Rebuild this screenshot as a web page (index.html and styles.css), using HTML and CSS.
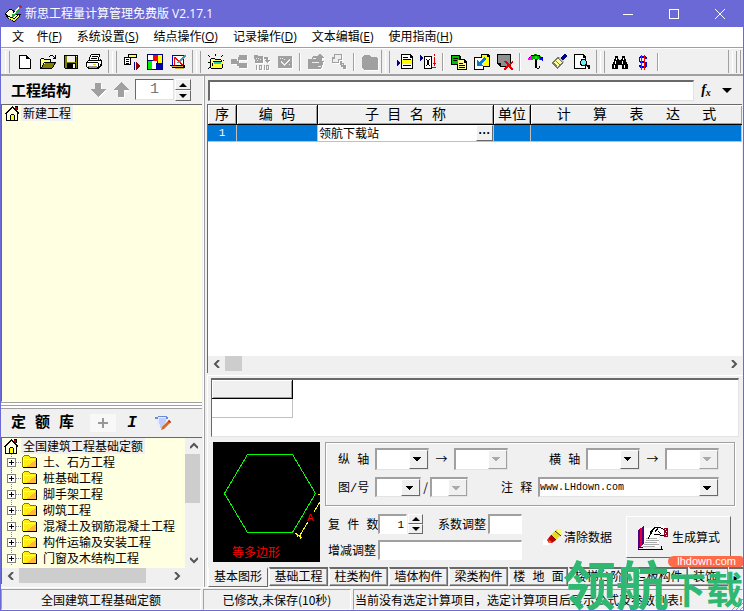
FILE: index.html
```html
<!DOCTYPE html>
<html lang="zh-CN">
<head>
<meta charset="utf-8">
<title>新思工程量计算管理免费版 V2.17.1</title>
<link rel="stylesheet" href="styles.css">
</head>
<body>
<svg class="defs" aria-hidden="true">
  <symbol id="house" viewBox="0 0 16 16">
    <path d="M11 2h2v4h-2z" fill="#c00000"/>
    <path d="M3 8h10v7H3z" fill="#ffffe1"/>
    <path d="M7 10h3v5H7z" fill="#ffff00"/>
    <path d="M1 8h1V7h1V6h1V5h1V4h1V3h1V2h1V1h1v1h1v1h1v1h1v1h1v1h1v1h1v2h-1V8h-1V7h-1V6h-1V5h-1V4h-1V3H8v1H7v1H6v1H5v1H4v1H3v1H1zM2 8h1v7h10V8h1v8H2zM6 10h1V9h3v1h1v5h-1v-5H7v5H6zM11 1h2v1h-2zM13 1h1v4h-1z" fill="#000"/>
  </symbol>
  <symbol id="folder" viewBox="0 0 16 14">
    <path d="M1 2h1V1h5v1h1v1h6v9H1z" fill="#ffee10"/>
    <path d="M14 4v8H4l10-7z" fill="#ffb838"/>
    <path d="M2 1h5V0H2zM0 2h1v10H0zM8 2h6v1H8zM1 1h1v1H1zM7 1h1v1H7z" fill="#808000"/>
    <path d="M1 4h12v1H1zM1 2h1v9H1z" fill="#ffff9c"/>
    <path d="M14 3h1v10H1v-1h13z" fill="#000"/>
  </symbol>
</svg>
<div class="app">
  <header class="titlebar">
    <svg class="app-icon" viewBox="0 0 18 18" aria-hidden="true">
      <path d="M0 8l5-4 4 1 3 4 4 0-1 3-6 5-8-5z" fill="#000"/>
      <path d="M1 8l4-3 3 1 1 3 4 1-4 3-7-3z" fill="#ffffd8"/>
      <path d="M3 12l6 2 5-4v2l-5 4-6-3z" fill="#ffff30"/>
      <path d="M7 10l6-8 3 2-6 7-3 1z" fill="#20b040"/>
      <path d="M8 9l5-7 1 1-5 7z" fill="#fff"/>
      <path d="M13 1l2-1 2 2-1 2z" fill="#d02020"/>
    </svg>
    <h1 class="title">新思工程量计算管理免费版 V2.17.1</h1>
    <div class="window-buttons">
      <button aria-label="最小化"><svg viewBox="0 0 10 10"><path d="M0 5.5h10"/></svg></button>
      <button aria-label="最大化"><svg viewBox="0 0 10 10"><path d="M.5.5h9v9h-9z"/></svg></button>
      <button aria-label="关闭"><svg class="smooth" viewBox="0 0 10 10"><path d="M0 0l10 10M10 0L0 10"/></svg></button>
    </div>
  </header>

  <nav class="menu">
    <button>文    件(<u>F</u>)</button>
    <button>系统设置(<u>S</u>)</button>
    <button>结点操作(<u>O</u>)</button>
    <button>记录操作(<u>D</u>)</button>
    <button>文本编辑(<u>E</u>)</button>
    <button>使用指南(<u>H</u>)</button>
  </nav>

  <div class="toolbar">
    <div class="group">
      <button aria-label="新建"><svg viewBox="0 0 16 16"><path d="M3 1h7l3 3v11H3z" fill="#fff"/><path d="M2 1h8v1H3v12h10V5h1v10H2zM10 2h1v1h1v1h1v1h-4V2z"/></svg></button>
      <button aria-label="打开"><svg viewBox="0 0 16 16"><path d="M1 5h3l1 1h6v3H5l-3 5H1z" fill="#ffff80"/><path d="M5 9h11l-4 5H2z" fill="#808000"/><path d="M1 4h3v1H1zM0 5h1v10H0zM4 5h7v1H4zM10 6h1v2h-1zM4 8h12v1H4zM3 9h1v2H3zM2 11h1v2H2zM1 13h1v1H1zM0 14h12v1H0zM12 13h1v1h-1zM13 11h1v2h-1zM14 9h1v2h-1zM9 2h1V1h3v1h1v1h1V1h1v4h-3V4h1V3h-1V2h-3v1H9z"/></svg></button>
      <button aria-label="保存"><svg viewBox="0 0 16 16"><path d="M1 1h14v14H2l-1-1z"/><path d="M2 2h2v6h9V2h1v12H2z" fill="#808000"/><path d="M4 2h8v6H4z" fill="#eee"/><path d="M4 9h9v6H4z"/><path d="M10 10h2v4h-2zM13 2h1v1h-1z" fill="#eee"/></svg></button>
      <button aria-label="打印"><svg viewBox="0 0 16 16"><path d="M5 1h9l-2 6H3zM1 7h14v6l-2 2H1z" fill="#fff"/><path d="M5 0h9v1H5zM4 1h1v2H4zM3 3h1v3H3zM13 1h1v2h-1zM12 3h1v3h-1zM6 2h6v1H6zM5 4h6v1H5zM2 6h12v1H2zM1 7h1v1H1zM0 8h1v5H0zM1 8h11v1H1zM14 5h1v1h1v6h-1v1h-1v1h-1v1H2v-1H1v-1h11V9h1v3h1v-2h1V7h-1z"/><path d="M2 12h9v2H3z" fill="#999"/><path d="M7 10h3v1H7z" fill="#e8d800"/></svg></button>
    </div>
    <div class="group">
      <button aria-label="添加项"><svg viewBox="0 0 16 16"><path d="M0 3h7v8H0zM4 0h9v4H4z"/><path d="M1 4h5v6H1z" fill="#fff"/><path d="M5 1h7v2H5z" fill="#ffff60"/><path d="M2 5h3v1H2zM2 7h3v1H2zM2 9h3v1H2z"/><path d="M10 8h1v8h-1z" fill="#000080"/><path d="M12 8l4 4-4 4z" fill="#900000"/></svg></button>
      <button aria-label="颜色"><svg viewBox="0 0 16 16"><path d="M0 0h16v16H0z" fill="#000080"/><path d="M1 1h5v5H1z" fill="#fff"/><path d="M6 1h5v6H6z" fill="#f00"/><path d="M11 1h4v8h-4z" fill="#ff0"/><path d="M1 7h4v8H1z" fill="#0e0"/><path d="M5 7h5v8H5z" fill="#fff"/><path d="M9 9h6v6H9z" fill="#0000b0"/></svg></button>
      <button aria-label="图形计算"><svg viewBox="0 0 16 16"><path d="M2 1h12v11H2z" fill="#00c"/><path d="M3 2h10v9H3z" fill="#fff"/><path d="M4 3h1l8 8h-2L5 5v6H4z" fill="#f00"/><path d="M15 0l1 2-7 7H7l1-2z" fill="#40a0a0"/><path d="M0 11h15v3H2z"/><path d="M1 12h12v1H1zM5 14h9v1H5z" fill="#d0b040"/></svg></button>
    </div>
    <div class="group tight">
      <button aria-label="新建结点"><svg viewBox="0 0 16 16"><path d="M3 5h4l1 1h5v8H3z" fill="#ffff70"/><path d="M5 8h11l-3 6H3z" fill="#ffff30"/><path d="M6 8h7v2H6z" fill="#20c8c8"/><path d="M3 4h4v1H3zM2 5h1v9H2zM7 5h6v1H7zM13 6h1v2h-1zM3 14h11v1H3zM14 10h1v4h-1zM5 7h8v1H5zM4 9h1v3H4zM0 1h1v1h1v1H1V2H0zM7 0h1v2H7zM15 1h-1v1h-1v1h1V2h1zM0 8h2v1H0zM0 14h1v-1h1v1H1v1H0zM15 6h1v1h-1z"/></svg></button>
      <button class="off" aria-label="子结点"><svg viewBox="0 0 16 16"><path d="M8 1h8v5H8zM0 5h6v5H0zM8 9h8v5H8zM6 7h1V3h1v2H8v7H6z"/></svg></button>
      <button class="off" aria-label="编号"><svg viewBox="0 0 16 16"><path d="M0 1h3l1 1h5v7H1zM10 3h4v3h2l-3 3-3-3h2V5h-2zM2 11h1v5H2zM5 11h3v5H5zM10 11h1v5h-1zM12 11h3v5h-3z"/><path d="M2 4h1v1H2zM4 4h1v1H4zM6 5h1v1H6zM3 6h1v1H3zM6 12h1v3H6zM13 12h1v3h-1z" fill="#eee"/></svg></button>
      <button class="off" aria-label="确认"><svg viewBox="0 0 16 16"><path d="M1 2h14v12H1z"/><path d="M4 7l3 3 6-6v2l-6 6-3-3zM3 4h1v1H3zM5 4h1v1H5zM7 5h1v1H7zM12 10h1v1h-1z" fill="#eee"/></svg></button>
      <i class="sep"></i>
      <button class="off" aria-label="上移"><svg viewBox="0 0 16 16"><path d="M5 2h4l3-2 4 4h-2v3h2l-3 8H0V5h4z"/><path d="M4 8h7v1H4zM5 4h3v1H5zM10 12h3v1h-3z" fill="#eee"/></svg></button>
      <button class="off" aria-label="排列"><svg viewBox="0 0 16 16"><path d="M3 0h8v6H3zM1 3h7v6H1zM9 7h2v2h2v2h2v4h-3v-2h-2v-2H9z"/><path d="M4 1h6v4H4zM2 5h5v3H2zM11 10h1v1h-1z" fill="#eee"/></svg></button>
      <i class="sep"></i>
      <button class="off" aria-label="停用"><svg viewBox="0 0 16 16"><path d="M1 2h1V1h6v1h1v1h6v1h1v12H2v-1H1v-1H0V3h1z"/></svg></button>
    </div>
    <div class="group">
      <button aria-label="插入行"><svg viewBox="0 0 16 16"><path d="M4 0h9l3 3v12H4z"/><path d="M5 1h8v3h2v10H5z" fill="#fff"/><path d="M5 6h10v4H5z" fill="#ff0"/><path d="M6 3h5v1H6zM6 5h8v1H6zM6 11h8v1H6z"/><path d="M0 6l3 3-3 3z" fill="#000090"/></svg></button>
      <button aria-label="插入列"><svg viewBox="0 0 16 16"><path d="M4 2h8v13H4z"/><path d="M5 3h6v11H5z" fill="#fff"/><path d="M6 5h1v1h2V5h1v1H9v5h1v1H9v-1H7v1H6v-1h1V6H6z"/><path d="M0 1l3 3-3 3z" fill="#000090"/><path d="M14 0h1v2h-1zM14 3h1v6h1v1h-1v2h-1v-2h-1V9h1zM12 13h4v1h-4z" fill="#e00000"/></svg></button>
      <i class="sep"></i>
      <button aria-label="复制"><svg viewBox="0 0 16 16"><path d="M0 1h8l2 2v8H0zM6 5h7l3 3v8H6z"/><path d="M1 2h7v8H1z" fill="#00c000"/><path d="M7 6h6v3h2v6H7z" fill="#ffff90"/><path d="M2 4h5v1H2zM2 6h4v1H2zM8 9h4v1H8zM8 11h6v1H8zM8 13h6v1H8z"/></svg></button>
      <button aria-label="粘贴"><svg viewBox="0 0 16 16"><path d="M7 0h7l2 2v11H7zM0 3h10v13H0z"/><path d="M8 1h5v2h2v9H8z" fill="#ff0"/><path d="M1 4h8v11H1z" fill="#fff"/><path d="M11 3l1 2-5 5 2 2H3V6l2 2 5-5z" fill="#0080d0"/></svg></button>
      <button aria-label="删除"><svg viewBox="0 0 16 16"><path d="M0 0h14v13H3L0 10z"/><path d="M1 1h12v11H4V9H1z" fill="#909090"/><path d="M7 7h2l3 3 3-3h1v1l-3 4 3 3v1h-2l-3-3-2 3H7v-2l3-3-3-3z" fill="#e00000"/></svg></button>
      <i class="sep"></i>
      <button aria-label="伞形图"><svg viewBox="0 0 16 16"><path d="M1 6l1-3 5-3 6 2 2 4h-3l-2-1-2 2-2-2-3 1z" fill="#00b000"/><path d="M0 6V4l4-3-1 4z" fill="#f0f"/><path d="M11 2l4 2v3l-3-1z" fill="#00f"/><path d="M7 1h2v4H7z" fill="#0e0"/><path d="M7 0h1v1H7zM3 1h9v1H3zM1 3h1v1H1zM13 3h2v1h-2zM7 5h2v9H7zM9 14h2v1H9zM11 12h1v2h-1z"/></svg></button>
      <button aria-label="格式刷"><svg viewBox="0 0 16 16"><path d="M14 0l2 2-4 5-3-3z" fill="#000090"/><path d="M0 9l7-6 6 5-6 7z" fill="#777"/><path d="M2 9l5-4 4 3-4 5z" fill="#ffff90"/><path d="M8 3l5 5-1 1-5-5z" fill="#bbb"/><path d="M3 9l3 3M5 7l4 4" stroke="#777"/></svg></button>
      <button aria-label="预览"><svg viewBox="0 0 16 16"><path d="M0 0h9l3 3v12H0z"/><path d="M1 1h8v3h2v10H1z" fill="#fff"/><path d="M7 5h4v1h1v1h1v4h3v4h-2v-2h-1v-1H7v-1H6V7h1z"/><path d="M8 6h3v1h1v3h-1v1H8v-1H7V7h1z" fill="#70e8f0"/></svg></button>
    </div>
    <div class="group wide">
      <button aria-label="查找"><svg viewBox="0 0 16 16"><path d="M3 2h3v3h1v1h2V5h1V2h3v3h1v3h1v2h1v5h-6v-4H6v4H0v-5h1V8h1V5h1z"/><path d="M4 4h1v2H4zM3 7h1v3H3zM11 4h1v2h-1zM10 7h1v3h-1zM2 11h1v3H2zM12 11h1v3h-1z" fill="#fff"/></svg></button>
      <button aria-label="金额"><svg viewBox="0 0 16 16"><path d="M5 2h6v1h1v2h-2V4H5v3h5v1h2v5h-1v1H5v-1H4v-2h2v1h4V9H5V8H4V3h1z" fill="#00e"/><path d="M6 1h1v15H6zM9 1h1v15H9z" fill="#f00"/></svg></button>
      <i class="sep"></i>
    </div>
    <div class="group"></div>
  </div>

  <div class="workspace">
    <aside class="side">
      <div class="side-head">
        <h2>工程结构</h2>
        <button class="flat" aria-label="下移"><svg viewBox="0 0 16 16"><path d="M6 2h6v6h5l-8 8-8-8h5z" fill="#fff"/><path d="M5 1h6v6h5l-8 8-8-8h5z" fill="#a0a0a0"/></svg></button>
        <button class="flat" aria-label="上移"><svg viewBox="0 0 16 16"><path d="M6 16h6v-6h4L9 2 1 9h5z" fill="#fff"/><path d="M5 15h6V8h5L8 0 0 8h5z" fill="#a0a0a0"/></svg></button>
        <div class="stepper">
          <input class="level" aria-label="层级" value="1">
          <span class="spin big"><button aria-label="增加"></button><button aria-label="减少"></button></span>
        </div>
      </div>
      <div class="tree project">
        <div class="node root"><svg><use href="#house"/></svg><span>新建工程</span></div>
      </div>
      <div class="splitter"></div>
      <div class="side-head">
        <h2 class="wide">定 额 库</h2>
        <button class="flat add" aria-label="添加"><svg viewBox="0 0 10 10"><path d="M4 0h2v4h4v2H6v4H4V6H0V4h4z" fill="#999"/></svg></button>
        <button class="flat italic" aria-label="斜体">I</button>
        <button class="flat edit" aria-label="编辑"><svg class="smooth" viewBox="0 0 16 16"><path d="M2 1h10v3l1 8H4L2 9z" fill="#e4ebff"/><path d="M0 2h3v2H0zM3 1h9v1H3zM11 2h2v2h-2z" fill="#6a88dc"/><path d="M4 4h7M4 6h7M4 8h6M5 10h4M5 12h5" stroke="#9ab0f0"/><path d="M14 5l2 2-7 7-3 1 1-3z" fill="#d86820"/><path d="M14 5l2 2-1 1-2-2z" fill="#c02020"/></svg></button>
      </div>
      <div class="library">
        <div class="tree quota">
          <div class="node root"><svg><use href="#house"/></svg><span>全国建筑工程基础定额</span></div>
          <ul>
            <li class="node"><button class="plus" aria-label="展开"></button><svg><use href="#folder"/></svg><span>土、石方工程</span></li>
            <li class="node"><button class="plus" aria-label="展开"></button><svg><use href="#folder"/></svg><span>桩基础工程</span></li>
            <li class="node"><button class="plus" aria-label="展开"></button><svg><use href="#folder"/></svg><span>脚手架工程</span></li>
            <li class="node"><button class="plus" aria-label="展开"></button><svg><use href="#folder"/></svg><span>砌筑工程</span></li>
            <li class="node"><button class="plus" aria-label="展开"></button><svg><use href="#folder"/></svg><span>混凝土及钢筋混凝土工程</span></li>
            <li class="node"><button class="plus" aria-label="展开"></button><svg><use href="#folder"/></svg><span>构件运输及安装工程</span></li>
            <li class="node"><button class="plus" aria-label="展开"></button><svg><use href="#folder"/></svg><span>门窗及木结构工程</span></li>
          </ul>
        </div>
        <div class="scroll vertical">
          <button aria-label="向上"><svg viewBox="0 0 8 8"><path d="M0 6l4-4 4 4"/></svg></button>
          <div class="thumb"></div>
          <button class="end" aria-label="向下"><svg viewBox="0 0 8 8"><path d="M0 2l4 4 4-4"/></svg></button>
        </div>
        <div class="scroll horizontal">
          <button aria-label="向左"><svg viewBox="0 0 8 8"><path d="M6 0L2 4l4 4"/></svg></button>
          <div class="thumb"></div>
          <button class="end" aria-label="向右"><svg viewBox="0 0 8 8"><path d="M2 0l4 4-4 4"/></svg></button>
        </div>
      </div>
    </aside>

    <main class="main">
      <div class="formula">
        <input aria-label="表达式">
        <button class="fx" aria-label="函数">f<sub>x</sub></button>
        <button class="drop" aria-label="更多"></button>
      </div>

      <div class="sheet">
        <table>
          <colgroup><col class="c-no"><col class="c-code"><col class="c-name"><col class="c-unit"><col></colgroup>
          <thead><tr><th>序</th><th>编 码</th><th>子 目 名 称</th><th>单位</th><th>计　 算　 表　 达　 式</th></tr></thead>
          <tbody><tr><td class="num">1</td><td></td><td class="editing"><div><span>领航下载站</span><button aria-label="选择">···</button></div></td><td></td><td></td></tr></tbody>
        </table>
        <div class="scroll horizontal">
          <button aria-label="向左"><svg viewBox="0 0 8 8"><path d="M6 0L2 4l4 4"/></svg></button>
          <div class="thumb short"></div>
          <button class="end" aria-label="向右"><svg viewBox="0 0 8 8"><path d="M2 0l4 4-4 4"/></svg></button>
        </div>
      </div>

      <section class="params">
        <div class="results"><div class="res-head"></div><div class="res-cell"></div></div>
        <div class="editor">
          <svg class="shape" viewBox="0 0 107 120" role="img" aria-label="等多边形">
            <path d="M0 0h107v120H0z" fill="#000"/>
            <path d="M34.500 12.500h45l23 39-23 39h-45l-23-39z" fill="none" stroke="#0f0"/>
            <path d="M107 60l-6 10M95 80l-9 15M82 91l7 5M105 52l2 1M84 92v3M87 93v4" fill="none" stroke="#ff0"/>
            <text x="94" y="79" class="mark">A</text>
            <text x="19" y="115" class="caption">等多边形</text>
          </svg>
          <form class="fields">
            <div class="box">
              <div class="row">
                <label for="v1">纵 轴</label>
                <span class="combo w54"><select id="v1"></select></span>
                <span class="to">→</span>
                <span class="combo w54 off"><select aria-label="纵轴终点" disabled></select></span>
                <label class="right" for="h1">横 轴</label>
                <span class="combo w54"><select id="h1"></select></span>
                <span class="to">→</span>
                <span class="combo w54 off"><select aria-label="横轴终点" disabled></select></span>
              </div>
              <div class="row low">
                <label for="pic">图/号</label>
                <span class="combo w46"><select id="pic"></select></span>
                <span class="slash">/</span>
                <span class="combo w38 off"><select aria-label="号" disabled></select></span>
                <label class="right" for="note">注 释</label>
                <span class="combo w181"><select id="note"><option>www.LHdown.com</option></select></span>
              </div>
            </div>
            <div class="lower">
              <div class="adjust">
                <div class="row">
                  <label for="copies">复 件 数</label>
                  <input id="copies" class="copies" value="1">
                  <span class="spin"><button type="button" aria-label="增加"></button><button type="button" aria-label="减少"></button></span>
                  <label class="right" for="factor">系数调整</label>
                  <input id="factor" class="factor">
                </div>
                <div class="row">
                  <label for="delta">增减调整</label>
                  <input id="delta" class="delta">
                </div>
              </div>
              <button type="button" class="clear"><svg class="smooth" viewBox="0 0 20 16"><path d="M0 11l6-2 4 4-4 3H0z" fill="#fff"/><path d="M12 2l3-2 4 1v4l-6 6-5-5z" fill="#e8dc20"/><path d="M15 0l4 1v4l-2 2-4-4z" fill="#ffff70"/><path d="M12 2l6 5M8 6l5 5" stroke="#222" fill="none"/><path d="M8 6l5 5-4 3H6l-2-3z" fill="#c00000"/><path d="M5 10l4 3-1 1H6z" fill="#ff5030"/></svg><span>清除数据</span></button>
              <button type="button" class="make"><svg viewBox="0 0 32 30"><path d="M1 8l6-4v18l-6 5z" fill="#e00040"/><path d="M1 8l2-1v18l-2 2zM5 5l2-1v18l-2 2z" fill="#500080"/><path d="M7 6h15v19H3l4-4z" fill="#fff"/><path d="M1 27h25v1H1zM1 25h5v1H1zM24 24h1v3h-1z"/><path d="M9 16h11v1H9zM9 18h13v1H9zM8 20h12v1H8zM7 22h15v1H7zM6 24h12v1H6z" fill="#aaa"/><path d="M13 12l5-8 8-1 4 4-1 5-10 1-5 3z" fill="#fff"/><path d="M11 16.500l6-10M13 10.500l5-5h5l4 2M18 9.500l3-3M17 12.500h5l2 1h3M21 9.500l3 2" fill="none" stroke="#000"/><path d="M26 5L19 0" stroke="#fff"/><path d="M27 6h4v9h-4z" fill="#900020"/><path d="M28 7h1v1h-1zM29 9h1v1h-1zM28 11h1v1h-1zM29 13h1v1h-1z" fill="#fff"/></svg><span>生成算式</span></button>
            </div>
          </form>
        </div>
        <div class="tabs">
          <button class="active">基本图形</button><button>基础工程</button><button>柱类构件</button><button>墙体构件</button><button>梁类构件</button><button>楼 地 面</button><button>楼梯台阶</button><button>栏板构件</button><button class="partial">装饰</button>
          <span class="tab-nav"><button aria-label="下一页">▸</button></span>
        </div>
      </section>
    </main>
  </div>

  <footer class="status">
    <span class="center s-lib">全国建筑工程基础定额</span>
    <span class="center s-save">已修改,未保存(10秒)</span>
    <span class="s-info">当前没有选定计算项目，选定计算项目后显示公式及参数列表!</span>
  </footer>

  <div class="watermark"><b>领航</b><em>下载</em><span>lhdown.com</span></div>
  <svg class="resize smooth" viewBox="0 0 12 12" aria-hidden="true"><path d="M1 12L12 1M5 12l7-7M9 12l3-3" stroke="#a0a0a0"/></svg>
</div>
</body>
</html>
```
FILE: styles.css
```css
* { box-sizing: border-box; }

:root {
  --face: #f0f0f0;
  --dark: #696969;
  --mid: #a0a0a0;
  --accent: #6b69d6;
  --cream: #ffffe1;
  --cjk: "Noto Sans CJK SC", sans-serif;
  --spaced: "Liberation Mono", "Noto Sans CJK SC", monospace;
}

body {
  margin: 0;
  font: 12px/16px var(--cjk);
  color: #000;
}

button, input, select {
  margin: 0;
  padding: 0;
  border: 0;
  border-radius: 0;
  background: none;
  font: inherit;
  color: inherit;
  outline: 0;
}

h1, h2, ul { margin: 0; padding: 0; }
ul { list-style: none; }

svg { display: block; flex: none; shape-rendering: crispEdges; }
.smooth { shape-rendering: auto; }
.defs { position: absolute; width: 0; height: 0; }

.app {
  position: relative;
  display: flex;
  flex-direction: column;
  height: 100vh;
  overflow: hidden;
  background: var(--face);
  border: 1px solid var(--accent);
  border-top: 0;
}

/* title bar */
.titlebar {
  display: flex;
  align-items: center;
  flex: none;
  height: 27px;
  padding-left: 4px;
  background: var(--accent);
  color: #fff;
}
.app-icon { width: 18px; height: 18px; }
.title {
  flex: 1;
  margin-left: 2px;
  font: 12px/16px "Open Sans", var(--cjk);
}
.window-buttons { display: flex; }
.window-buttons button {
  display: grid;
  place-items: center;
  width: 46px;
  height: 27px;
}
.window-buttons svg { width: 10px; height: 10px; fill: none; stroke: #fff; overflow: visible; }

/* menu */
.menu {
  display: flex;
  flex: none;
  gap: 15px;
  height: 20px;
  padding-left: 11px;
  background: #fff;
  font: 12px/20px "Open Sans", var(--cjk);
  white-space: pre;
}

/* toolbar */
.toolbar {
  display: flex;
  flex: none;
  gap: 3px;
  height: 29px;
  padding: 2px 2px 1px 4px;
  border-top: 1px solid var(--mid);
  border-bottom: 2px solid var(--mid);
  box-shadow: inset 0 1px #fff;
}
.group {
  display: flex;
  align-items: center;
  padding-right: 3px;
  border-right: 1px solid var(--mid);
}
.group.wide { flex: 1; }
.group:last-child { padding: 0; }
.group.tight { padding-right: 0; }
.group::before {
  content: "";
  width: 3px;
  height: 22px;
  margin-right: 3px;
  border-left: 1px solid #fff;
  border-right: 1px solid var(--mid);
}
.group button {
  display: grid;
  place-items: center;
  width: 23px;
  height: 22px;
}
.group svg { width: 16px; height: 16px; }
.group .off svg { fill: var(--mid); filter: drop-shadow(1px 1px 0 #fff); }
.sep {
  width: 2px;
  height: 18px;
  margin: 0 3px;
  border-left: 1px solid var(--mid);
  border-right: 1px solid #fff;
}

/* work area */
.workspace {
  display: grid;
  grid-template-columns: 203px minmax(0, 1fr);
  flex: 1;
  min-height: 0;
}
.side {
  display: flex;
  flex-direction: column;
  min-height: 0;
  padding: 0 1px 3px 0;
  border-right: 1px solid #fff;
}
.side-head {
  display: flex;
  align-items: center;
  flex: none;
  height: 28px;
  padding-left: 10px;
}
.side-head h2 { width: 79px; font: bold 15px/20px var(--cjk); }
.side-head h2.wide { padding-top: 2px; font-family: var(--spaced); white-space: nowrap; }
.flat { display: grid; place-items: center; width: 16px; height: 18px; margin-right: 7px; }
.flat svg { width: 16px; height: 16px; }
.stepper { display: flex; margin-left: -1px; }
.level {
  width: 39px;
  height: 21px;
  border: 1px solid #e3e3e3;
  border-top-color: var(--dark);
  border-left-color: var(--dark);
  background: #fff;
  color: #777;
  font: 15px/18px "Liberation Mono", monospace;
  text-align: center;
}
.flat.add { width: 26px; margin: 0 9px 0 0; background: #f8f8f8; }
.flat.add svg { width: 10px; height: 10px; }
.flat.italic { width: 14px; margin-right: 16px; font: italic bold 16px/18px "Liberation Mono", monospace; }

.spin { display: flex; flex-direction: column; width: 15px; height: 20px; }
.spin.big { height: 22px; width: 16px; margin-left: 1px; }
.spin button {
  display: grid;
  place-items: center;
  flex: 1;
  border: 1px solid var(--dark);
  border-top-color: #fff;
  border-left-color: #fff;
  background: var(--face);
}
.spin button::after {
  content: "";
  border: 4px solid transparent;
  border-top: 0;
  border-bottom-color: #000;
}
.spin button:last-child::after { border-top: 4px solid #000; border-bottom: 0; }

.tree {
  background: var(--cream);
  overflow: hidden;
}
.project {
  flex: 1;
  padding: 0 2px;
  border-top: 1px solid var(--dark);
  border-left: 1px solid var(--dark);
  border-bottom: 1px solid #fff;
}
.node { display: flex; align-items: center; height: 16px; white-space: nowrap; }
.root svg { width: 16px; height: 16px; }
.root span { margin-left: 2px; padding: 0 2px; background: #f0f0f0; line-height: 16px; }
.project .root span { margin-left: 1px; }
.splitter {
  flex: none;
  height: 7px;
  border-top: 1px solid var(--mid);
  border-bottom: 1px solid var(--mid);
  background: linear-gradient(#fff 2px, var(--mid) 2px, var(--mid) 3px, #fff 3px);
}
.library {
  display: grid;
  grid-template-columns: minmax(0, 1fr) 17px;
  grid-template-rows: 130px 16px;
  flex: none;
  border-top: 1px solid var(--dark);
  border-left: 1px solid var(--dark);
}
.quota { padding-left: 1px; }
.quota ul {
  padding-left: 4px;
  background: repeating-linear-gradient(#888 0 1px, transparent 1px 2px) 8px 0 / 1px 100% no-repeat;
}
.quota li svg { width: 16px; height: 14px; }
.quota li span { margin-left: 5px; }
.quota li {
  background: repeating-linear-gradient(90deg, #888 0 1px, transparent 1px 2px) 9px 8px / 6px 1px no-repeat;
}
.plus {
  width: 9px;
  height: 9px;
  margin-right: 6px;
  border: 1px solid #808080;
  background:
    linear-gradient(#000, #000) center / 5px 1px no-repeat,
    linear-gradient(#000, #000) center / 1px 5px no-repeat,
    #fff;
}

.scroll { display: flex; background: var(--face); }
.scroll button { display: grid; place-items: center; width: 17px; height: 16px; }
.scroll svg { width: 8px; height: 8px; fill: none; stroke: #555; stroke-width: 2; shape-rendering: auto; }
.scroll.vertical { flex-direction: column; }
.scroll .end { margin-left: auto; }
.vertical .end { margin: auto 0 0; }
.thumb { background: #cdcdcd; }
.vertical .thumb { height: 49px; width: 15px; }
.horizontal .thumb { width: 127px; height: 15px; }
.horizontal .thumb.short { width: 17px; }

/* main pane */
.main {
  display: flex;
  flex-direction: column;
  min-width: 0;
  min-height: 0;
  padding-left: 2px;
  border-left: 1px solid var(--mid);
}
.formula {
  display: flex;
  align-items: center;
  flex: none;
  height: 28px;
  padding: 2px 8px 2px 1px;
}
.formula input {
  flex: 1;
  min-width: 0;
  height: 21px;
  border: 1px solid #e3e3e3;
  border-top: 2px solid var(--dark);
  border-left: 2px solid var(--dark);
  background: #fff;
}
.fx { width: 24px; font: italic bold 14px/18px "Liberation Serif", serif; }
.fx sub { font-size: 10px; line-height: 8px; vertical-align: -2px; }
.drop { width: 17px; height: 18px; display: grid; place-items: center; }
.drop::after { content: ""; border: 5px solid transparent; border-top-color: #000; border-bottom: 0; }

.sheet {
  display: flex;
  flex-direction: column;
  justify-content: space-between;
  flex: 1;
  min-height: 0;
  margin: 0 1px 2px 0;
  border-top: 1px solid var(--dark);
  border-left: 1px solid var(--dark);
  background: #fff;
}
.sheet table { width: 100%; table-layout: fixed; border-collapse: separate; border-spacing: 0; }
.c-no { width: 29px; }
.c-code { width: 81px; }
.c-name { width: 176px; }
.c-unit { width: 37px; }
.sheet th {
  height: 20px;
  padding: 0;
  border-right: 1px solid #000;
  border-bottom: 1px solid #000;
  background: var(--face);
  box-shadow: inset 1px 1px #fff, inset -1px -1px var(--mid);
  font: 14px/18px var(--spaced);
  white-space: pre;
}
.sheet th:last-child { border-right: 0; }
.sheet td {
  height: 17px;
  padding: 0;
  border-right: 1px solid #c0c0c0;
  border-bottom: 1px solid #c0c0c0;
  background: #0078d7;
  color: #fff;
  line-height: 16px;
}
.sheet td.num { font: 11px/16px "Liberation Mono", monospace; text-align: center; }
.sheet td.editing { background: #fff; color: #000; }
.editing div { display: flex; justify-content: space-between; padding-left: 1px; }
.editing button {
  width: 17px;
  height: 16px;
  border: 1px solid var(--dark);
  border-top-color: #fff;
  border-left-color: #fff;
  background: var(--face);
  font: bold 12px/12px "Liberation Sans", sans-serif;
}
.sheet > .scroll { height: 17px; }

.params {
  flex: none;
  border-top: 1px solid #fff;
  border-left: 1px solid #fff;
  padding-top: 2px;
}
.results {
  height: 59px;
  margin: 0 4px 0 3px;
  border: 1px solid #e3e3e3;
  border-top: 2px solid var(--dark);
  border-left: 1px solid var(--dark);
  background: #fff;
}
.res-head {
  width: 81px;
  height: 19px;
  border-right: 1px solid #000;
  border-bottom: 1px solid #000;
  background: var(--face);
  box-shadow: inset 1px 1px #fff, inset -1px -1px var(--mid);
}
.res-cell { width: 81px; height: 19px; border: solid #c0c0c0; border-width: 0 1px 1px 0; }

.editor { display: flex; gap: 5px; padding: 5px 8px 5px 5px; }
.shape { width: 107px; height: 120px; }
.mark { font: 11px "Liberation Mono", monospace; fill: #f00; }
.caption { font: 12px var(--cjk); fill: #f00; }
.fields { flex: 1; min-width: 0; }
.box {
  display: flex;
  flex-direction: column;
  gap: 7px;
  height: 64px;
  padding: 5px 15px 0 12px;
  border: 1px solid var(--mid);
  box-shadow: inset 1px 1px #fff, 1px 1px #fff;
}
.row { display: flex; align-items: center; }
.row label { width: 37px; padding-top: 3px; font-family: var(--spaced); white-space: nowrap; }
.row label.right { margin-left: auto; }
.to { width: 25px; text-align: center; }
.slash { width: 9px; text-align: center; }

.combo {
  display: flex;
  height: 22px;
  border: 1px solid #e3e3e3;
  border-top: 2px solid var(--mid);
  border-left: 2px solid var(--mid);
  background: #fff;
}
.low .combo { height: 20px; }
.w54 { width: 54px; }
.w46 { width: 46px; }
.w38 { width: 38px; }
.w181 { width: 181px; }
.combo select {
  flex: 1;
  min-width: 0;
  appearance: none;
  font: 10px/16px "Liberation Mono", monospace;
  opacity: 1;
}
.combo::after {
  content: "";
  width: 17px;
  border: 1px solid var(--dark);
  border-top-color: #fff;
  border-left-color: #fff;
  background-color: var(--face);
  background-image:
    linear-gradient(45deg, transparent 50%, #000 50%),
    linear-gradient(-45deg, transparent 50%, #000 50%);
  background-position: 3px 6px, 7px 6px;
  background-repeat: no-repeat;
  background-size: 4px 4px;
}
.combo.off::after {
  border-color: #fff var(--mid) var(--mid) #fff;
  background-image:
    linear-gradient(45deg, transparent 50%, #aaa 50%),
    linear-gradient(-45deg, transparent 50%, #aaa 50%);
}

.lower { display: flex; align-items: center; gap: 14px; padding: 8px 4px 0 3px; }
.adjust { display: flex; flex-direction: column; gap: 6px; width: 194px; }
.adjust .row label { width: 50px; }
.adjust input {
  height: 20px;
  border: 1px solid #fff;
  border-top: 2px solid var(--mid);
  border-left: 2px solid var(--mid);
  background: #fff;
}
.adjust input.copies {
  width: 29px;
  padding-right: 2px;
  margin-right: 1px;
  font: 11px/16px "Liberation Mono", monospace;
  text-align: right;
}
.adjust .factor { width: 34px; }
.adjust .delta { flex: 1; min-width: 0; }
.clear, .make { display: flex; align-items: center; white-space: nowrap; }
.clear { gap: 1px; margin-left: auto; }
.clear svg { width: 20px; height: 16px; }
.make {
  gap: 3px;
  height: 42px;
  padding: 0 10px 0 10px;
  border: 1px solid var(--dark);
  border-top-color: #fff;
  border-left-color: #fff;
}
.make svg { width: 32px; height: 30px; }

.tabs { display: flex; gap: 1px; height: 20px; overflow: hidden; }
.tabs > button {
  flex: none;
  width: 59px;
  height: 19px;
  padding-top: 1px;
  border: 1px solid var(--dark);
  border-top-width: 2px;
  border-left-color: #fff;
  font: 12px/16px var(--spaced);
  box-shadow: inset -1px -1px var(--mid);
}
.tabs > .active { width: 60px; height: 20px; border-top-color: transparent; box-shadow: none; }
.tabs > .partial { flex: 1 1 0; width: auto; min-width: 0; padding-left: 3px; border-right: 0; text-align: left; white-space: nowrap; }
.tab-nav { display: flex; flex: none; border-top: 2px solid var(--dark); }
.tab-nav button { width: 14px; font: 10px/16px "DejaVu Sans", sans-serif; }

/* status bar */
.status {
  display: grid;
  grid-template-columns: 200px 148px minmax(0, 1fr);
  flex: none;
  gap: 2px;
  height: 23px;
  padding-top: 1px;
  border-top: 1px solid #fff;
  line-height: 19px;
  white-space: nowrap;
}
.status span { overflow: hidden; border: 1px solid #fff; border-top-color: var(--mid); border-left-color: var(--mid); }
.status .center { text-align: center; }
.status .s-info { padding-left: 1px; }

/* overlaid brand mark */
.watermark {
  position: absolute;
  right: 0;
  bottom: 0;
  display: flex;
  align-items: flex-end;
  height: 54px;
  color: #2eb872;
  white-space: nowrap;
}
.watermark b { font: bold 53px/54px var(--cjk); }
.watermark em { font: bold 37px/44px var(--cjk); }
.watermark span {
  position: absolute;
  right: 0;
  top: 0;
  padding: 0 7px 0 9px;
  border-radius: 8px 4px 4px 8px;
  background: #ff6a48;
  color: #fff;
  font: 11px/11px "Liberation Sans", sans-serif;
}
.resize { position: absolute; right: 0; bottom: 0; width: 12px; height: 12px; }
```
